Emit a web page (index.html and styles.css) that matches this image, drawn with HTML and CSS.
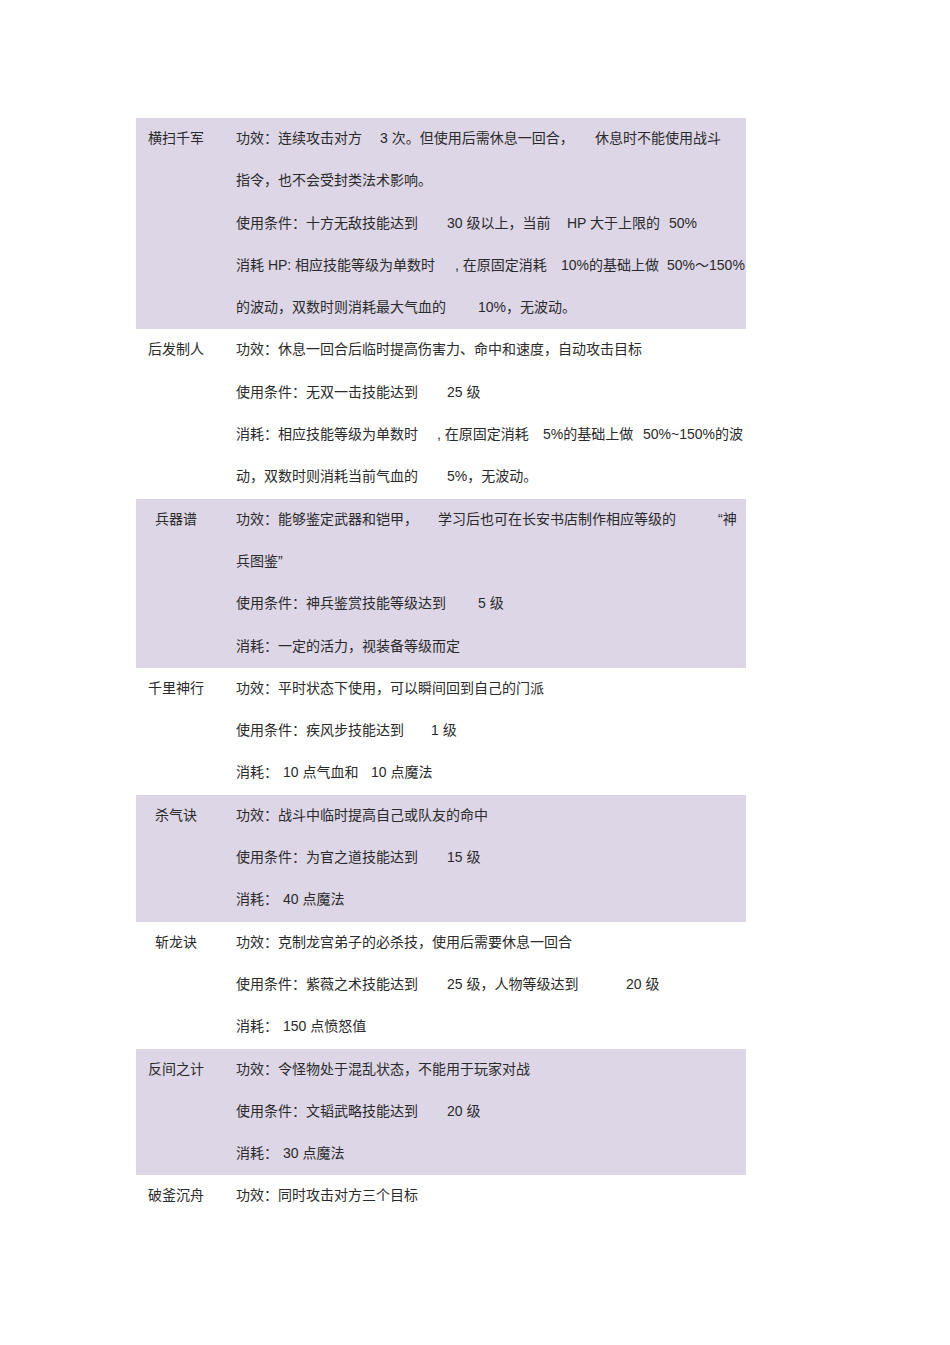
FILE: index.html
```html
<!DOCTYPE html>
<html lang="zh-CN">
<head>
<meta charset="utf-8">
<title>技能表</title>
<link rel="stylesheet" href="styles.css">
</head>
<body>
<div class="table">
  <div class="row shaded">
    <div class="name">横扫千军</div>
    <div class="desc">
      <div class="line"><span class="seg w144">功效：连续攻击对方</span><span class="seg w215">3 次。但使用后需休息一回合，</span><span class="seg">休息时不能使用战斗</span></div>
      <div class="line">指令，也不会受封类法术影响。</div>
      <div class="line"><span class="seg w211">使用条件：十方无敌技能达到</span><span class="seg w120">30 级以上，当前</span><span class="seg w102">HP 大于上限的</span><span class="seg">50%</span></div>
      <div class="line"><span class="seg w219">消耗 HP: 相应技能等级为单数时</span><span class="seg w106">, 在原固定消耗</span><span class="seg w106">10%的基础上做</span><span class="seg">50%～150%</span></div>
      <div class="line"><span class="seg w242">的波动，双数时则消耗最大气血的</span><span class="seg">10%，无波动。</span></div>
    </div>
  </div>
  <div class="row">
    <div class="name">后发制人</div>
    <div class="desc">
      <div class="line">功效：休息一回合后临时提高伤害力、命中和速度，自动攻击目标</div>
      <div class="line"><span class="seg w211">使用条件：无双一击技能达到</span><span class="seg">25 级</span></div>
      <div class="line"><span class="seg w201">消耗：相应技能等级为单数时</span><span class="seg w106">, 在原固定消耗</span><span class="seg w100">5%的基础上做</span><span class="seg">50%~150%的波</span></div>
      <div class="line"><span class="seg w211">动，双数时则消耗当前气血的</span><span class="seg">5%，无波动。</span></div>
    </div>
  </div>
  <div class="row shaded">
    <div class="name">兵器谱</div>
    <div class="desc">
      <div class="line"><span class="seg w202">功效：能够鉴定武器和铠甲，</span><span class="seg w280">学习后也可在长安书店制作相应等级的</span><span class="seg">“神</span></div>
      <div class="line">兵图鉴”</div>
      <div class="line"><span class="seg w242">使用条件：神兵鉴赏技能等级达到</span><span class="seg">5 级</span></div>
      <div class="line">消耗：一定的活力，视装备等级而定</div>
    </div>
  </div>
  <div class="row">
    <div class="name">千里神行</div>
    <div class="desc">
      <div class="line">功效：平时状态下使用，可以瞬间回到自己的门派</div>
      <div class="line"><span class="seg w195">使用条件：疾风步技能达到</span><span class="seg">1 级</span></div>
      <div class="line"><span class="seg w47">消耗：</span><span class="seg w88">10 点气血和</span><span class="seg">10 点魔法</span></div>
    </div>
  </div>
  <div class="row shaded">
    <div class="name">杀气诀</div>
    <div class="desc">
      <div class="line">功效：战斗中临时提高自己或队友的命中</div>
      <div class="line"><span class="seg w211">使用条件：为官之道技能达到</span><span class="seg">15 级</span></div>
      <div class="line"><span class="seg w47">消耗：</span><span class="seg">40 点魔法</span></div>
    </div>
  </div>
  <div class="row">
    <div class="name">斩龙诀</div>
    <div class="desc">
      <div class="line">功效：克制龙宫弟子的必杀技，使用后需要休息一回合</div>
      <div class="line"><span class="seg w211">使用条件：紫薇之术技能达到</span><span class="seg w179">25 级，人物等级达到</span><span class="seg">20 级</span></div>
      <div class="line"><span class="seg w47">消耗：</span><span class="seg">150 点愤怒值</span></div>
    </div>
  </div>
  <div class="row shaded">
    <div class="name">反间之计</div>
    <div class="desc">
      <div class="line">功效：令怪物处于混乱状态，不能用于玩家对战</div>
      <div class="line"><span class="seg w211">使用条件：文韬武略技能达到</span><span class="seg">20 级</span></div>
      <div class="line"><span class="seg w47">消耗：</span><span class="seg">30 点魔法</span></div>
    </div>
  </div>
  <div class="row">
    <div class="name">破釜沉舟</div>
    <div class="desc">
      <div class="line">功效：同时攻击对方三个目标</div>
    </div>
  </div>
</div>
</body>
</html>
```

FILE: styles.css
```css
html, body {
  margin: 0;
  padding: 0;
  background: #ffffff;
}

body {
  font-family: "Liberation Sans", "Noto Sans CJK SC", sans-serif;
  font-size: 14px;
  color: #2a2a2a;
}

.table {
  width: 610px;
  margin: 118px 0 0 136px;
}

.row {
  display: grid;
  grid-template-columns: 80px 1fr;
  column-gap: 20px;
  line-height: 40.8px;
}

.row.shaded {
  background: #ddd6e7;
}

.name {
  text-align: center;
  white-space: nowrap;
}

.desc {
  min-width: 0;
}

.line {
  white-space: nowrap;
  height: 42.3px;
}

.seg {
  display: inline-block;
  white-space: pre;
}

.w47 { width: 47px; }
.w88 { width: 88px; }
.w100 { width: 100px; }
.w102 { width: 102px; }
.w106 { width: 106px; }
.w120 { width: 120px; }
.w144 { width: 144px; }
.w179 { width: 179px; }
.w195 { width: 195px; }
.w201 { width: 201px; }
.w202 { width: 202px; }
.w211 { width: 211px; }
.w215 { width: 215px; }
.w219 { width: 219px; }
.w242 { width: 242px; }
.w280 { width: 280px; }
```
